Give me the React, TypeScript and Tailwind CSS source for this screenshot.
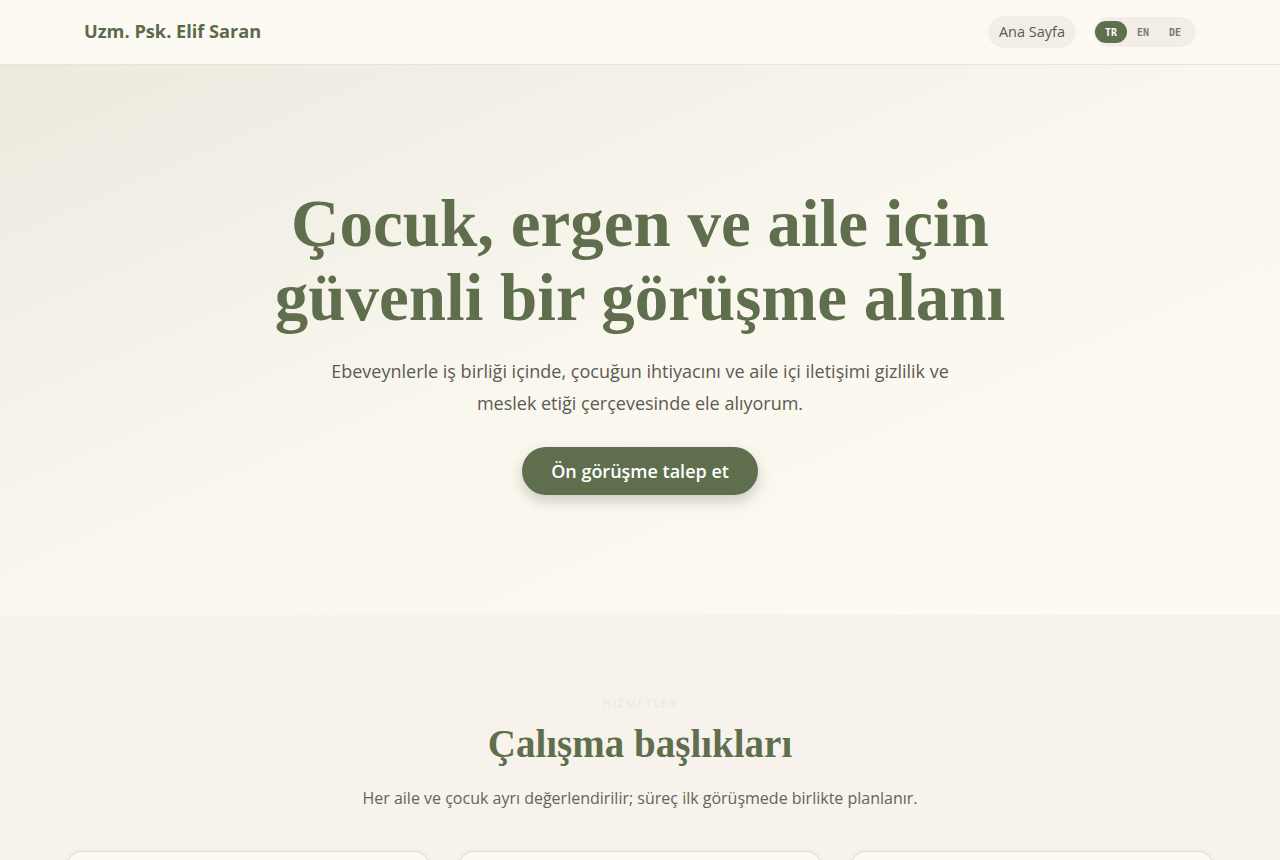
import { useState } from "react";

const serif = { fontFamily: '"Liberation Serif", "DejaVu Serif", serif' };

function Header() {
  const [lang, setLang] = useState("TR");
  return (
    <header className="h-[65px] bg-[#fdfaf3] border-b border-[#e8e4da]">
      <div className="mx-auto max-w-[1160px] px-6 h-full flex items-center justify-between">
        <span className="text-[18.2px] font-bold text-[#5c6a4c]">Uzm. Psk. Elif Saran</span>
        <div className="flex items-center gap-[18px]">
          <a className="h-8 px-[11px] rounded-full bg-[#f2eee5] text-[14.5px] text-[#5a5a50] flex items-center">Ana Sayfa</a>
          <div className="h-[30px] p-px rounded-full bg-[#f2eee5] flex items-center">
            {["TR", "EN", "DE"].map((l) => (
              <button
                key={l}
                onClick={() => setLang(l)}
                className={
                  l === lang
                    ? "h-[22px] w-8 rounded-full bg-[#5f6f4e] text-white text-[10px] font-bold"
                    : "h-[22px] w-8 rounded-full text-[#7a7a70] text-[10px] font-bold"
                }
                style={{ fontFamily: '"DejaVu Sans Mono", monospace' }}
              >
                {l}
              </button>
            ))}
            <span className="w-1" />
          </div>
        </div>
      </div>
    </header>
  );
}

function Hero() {
  return (
    <section className="h-[550px] bg-gradient-to-br from-[#ece9df] via-[#faf7ef] to-[#fdfaf3] flex flex-col items-center pt-[121px]">
      <h1 className="text-[67px] leading-[74px] font-bold text-[#5f6f4e] text-center" style={serif}>
        Çocuk, ergen ve aile için
        <br />
        güvenli bir görüşme alanı
      </h1>
      <p className="mt-[21px] max-w-[640px] text-center text-[18px] leading-8 text-[#5b5b52]">
        Ebeveynlerle iş birliği içinde, çocuğun ihtiyacını ve aile içi iletişimi gizlilik ve meslek etiği çerçevesinde ele alıyorum.
      </p>
      <button className="mt-[28px] h-12 px-[29px] rounded-full bg-[#5f6f4e] text-white text-[18px] font-semibold shadow-[0_6px_14px_rgba(60,70,45,0.25)]">
        Ön görüşme talep et
      </button>
    </section>
  );
}

function Services() {
  return (
    <section className="bg-[#f7f3ec] pt-[80px] pb-16">
      <div className="flex flex-col items-center">
        <span className="text-[11px] font-semibold tracking-[0.15em] uppercase text-[#ede9df]">Hizmetler</span>
        <h2 className="mt-[8px] text-[39px] leading-[48px] font-bold text-[#5f6f4e]" style={serif}>
          Çalışma başlıkları
        </h2>
        <p className="mt-[18px] text-[16px] text-[#64645a]">
          Her aile ve çocuk ayrı değerlendirilir; süreç ilk görüşmede birlikte planlanır.
        </p>
      </div>
      <div className="mx-auto mt-[41px] max-w-[1148px] grid grid-cols-3 gap-7">
        {["Çocuk", "Ergen", "Aile"].map((c) => (
          <div key={c} className="h-48 rounded-2xl border border-[#e3ded2] bg-[#fdfaf3] shadow-[0_-1px_3px_rgba(0,0,0,0.05)]" />
        ))}
      </div>
    </section>
  );
}

export default function App() {
  return (
    <div className="min-h-screen bg-[#f7f3ec]" style={{ fontFamily: '"Open Sans", "Noto Sans", sans-serif' }}>
      <Header />
      <Hero />
      <Services />
    </div>
  );
}
